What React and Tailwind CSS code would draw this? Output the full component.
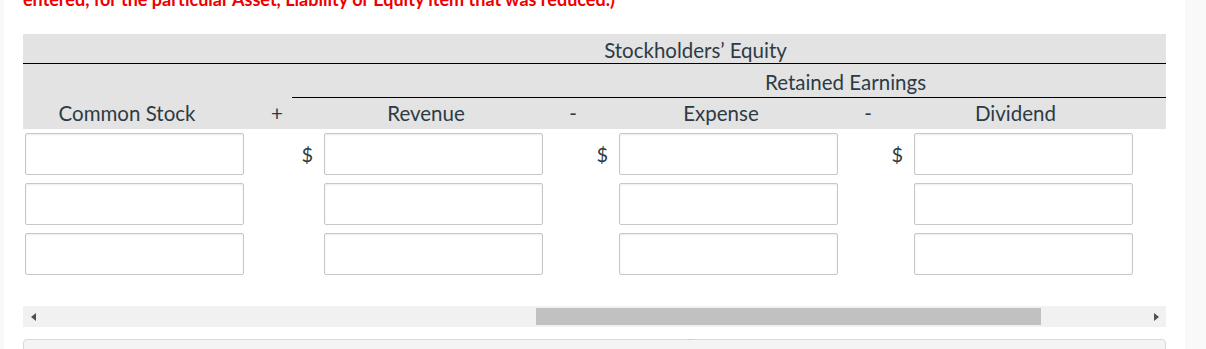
import React from "react";

const inputRows = [0, 1, 2];

const AmountInput = () => (
  <input
    type="text"
    className="h-[42px] w-[219px] shrink-0 rounded-[2px] border border-[#c7c7c7] bg-white shadow-[inset_0_1px_2px_rgba(0,0,0,0.08)] outline-none"
  />
);

// dollar sign cell sitting to the left of an amount input
const Dollar = ({ show, width }) => (
  <div
    className={`flex shrink-0 items-center justify-end pr-[11px] text-[20px] text-[#2d3b45] ${width}`}
  >
    {show ? "$" : ""}
  </div>
);

export default function App() {
  return (
    <div
      className="flex h-[349px] w-[1206px] overflow-hidden bg-white"
      style={{ fontFamily: "Lato, 'Open Sans', sans-serif" }}
    >
      <div className="w-[4px] shrink-0 bg-[#f9f9f9]" />

      <div className="flex w-[1181px] shrink-0 flex-col pl-[19px] pr-[19px]">
        {/* instructions line, scrolled mostly out of view */}
        <p className="-mt-[11px] h-[45px] shrink-0 whitespace-nowrap text-[18px] font-bold leading-[20px] text-[#ee0000]">
          entered, for the particular Asset, Liability or Equity item that was reduced.)
        </p>

        {/* equation header */}
        <div className="shrink-0 bg-[#e3e3e3] text-[20.5px] text-[#2d3b45]">
          <div className="flex h-[30px] items-center border-b border-black pl-[202px] pt-[4px]">
            <span className="flex-1 text-center">Stockholders’ Equity</span>
          </div>
          <div className="flex h-[34px]">
            <div className="w-[269px] shrink-0" />
            <div className="flex flex-1 items-center border-b border-black pl-[233px] pt-[4px]">
              <span className="flex-1 text-center">Retained Earnings</span>
            </div>
          </div>
          <div className="grid h-[31px] grid-cols-[208px_92px_206px_88px_208px_86px_209px_1fr] items-center text-center">
            <span>Common Stock</span>
            <span>+</span>
            <span>Revenue</span>
            <span>-</span>
            <span>Expense</span>
            <span>-</span>
            <span>Dividend</span>
            <span />
          </div>
        </div>

        {/* entry rows */}
        <div className="mt-[4px] flex shrink-0 flex-col gap-[8px]">
          {inputRows.map((row) => (
            <div key={row} className="flex pl-[2px]">
              <AmountInput />
              <Dollar show={row === 0} width="w-[80px]" />
              <AmountInput />
              <Dollar show={row === 0} width="w-[76px]" />
              <AmountInput />
              <Dollar show={row === 0} width="w-[76px]" />
              <AmountInput />
            </div>
          ))}
        </div>

        {/* horizontal scrollbar */}
        <div className="mt-[31px] flex h-[21px] shrink-0 items-center bg-[#f1f1f1]">
          <div className="flex w-[20px] justify-center">
            <svg width="5" height="8" viewBox="0 0 5 8">
              <path d="M5 0 L0 4 L5 8 Z" fill="#505050" />
            </svg>
          </div>
          <div className="ml-[493px] h-[17px] w-[505px] bg-[#c1c1c1]" />
          <div className="flex-1" />
          <div className="flex w-[20px] justify-center">
            <svg width="5" height="8" viewBox="0 0 5 8">
              <path d="M0 0 L5 4 L0 8 Z" fill="#505050" />
            </svg>
          </div>
        </div>

        {/* next panel peeking in */}
        <div className="relative mt-[12px] h-[20px] shrink-0 rounded-t-[4px] border border-[#d9d9d9] bg-[#f4f4f4]">
          <div className="absolute -top-px left-[663px] h-px w-[6px] bg-[#7ff0f0]" />
        </div>
      </div>

      <div className="flex-1 bg-[#f9f9f9]" />
    </div>
  );
}
